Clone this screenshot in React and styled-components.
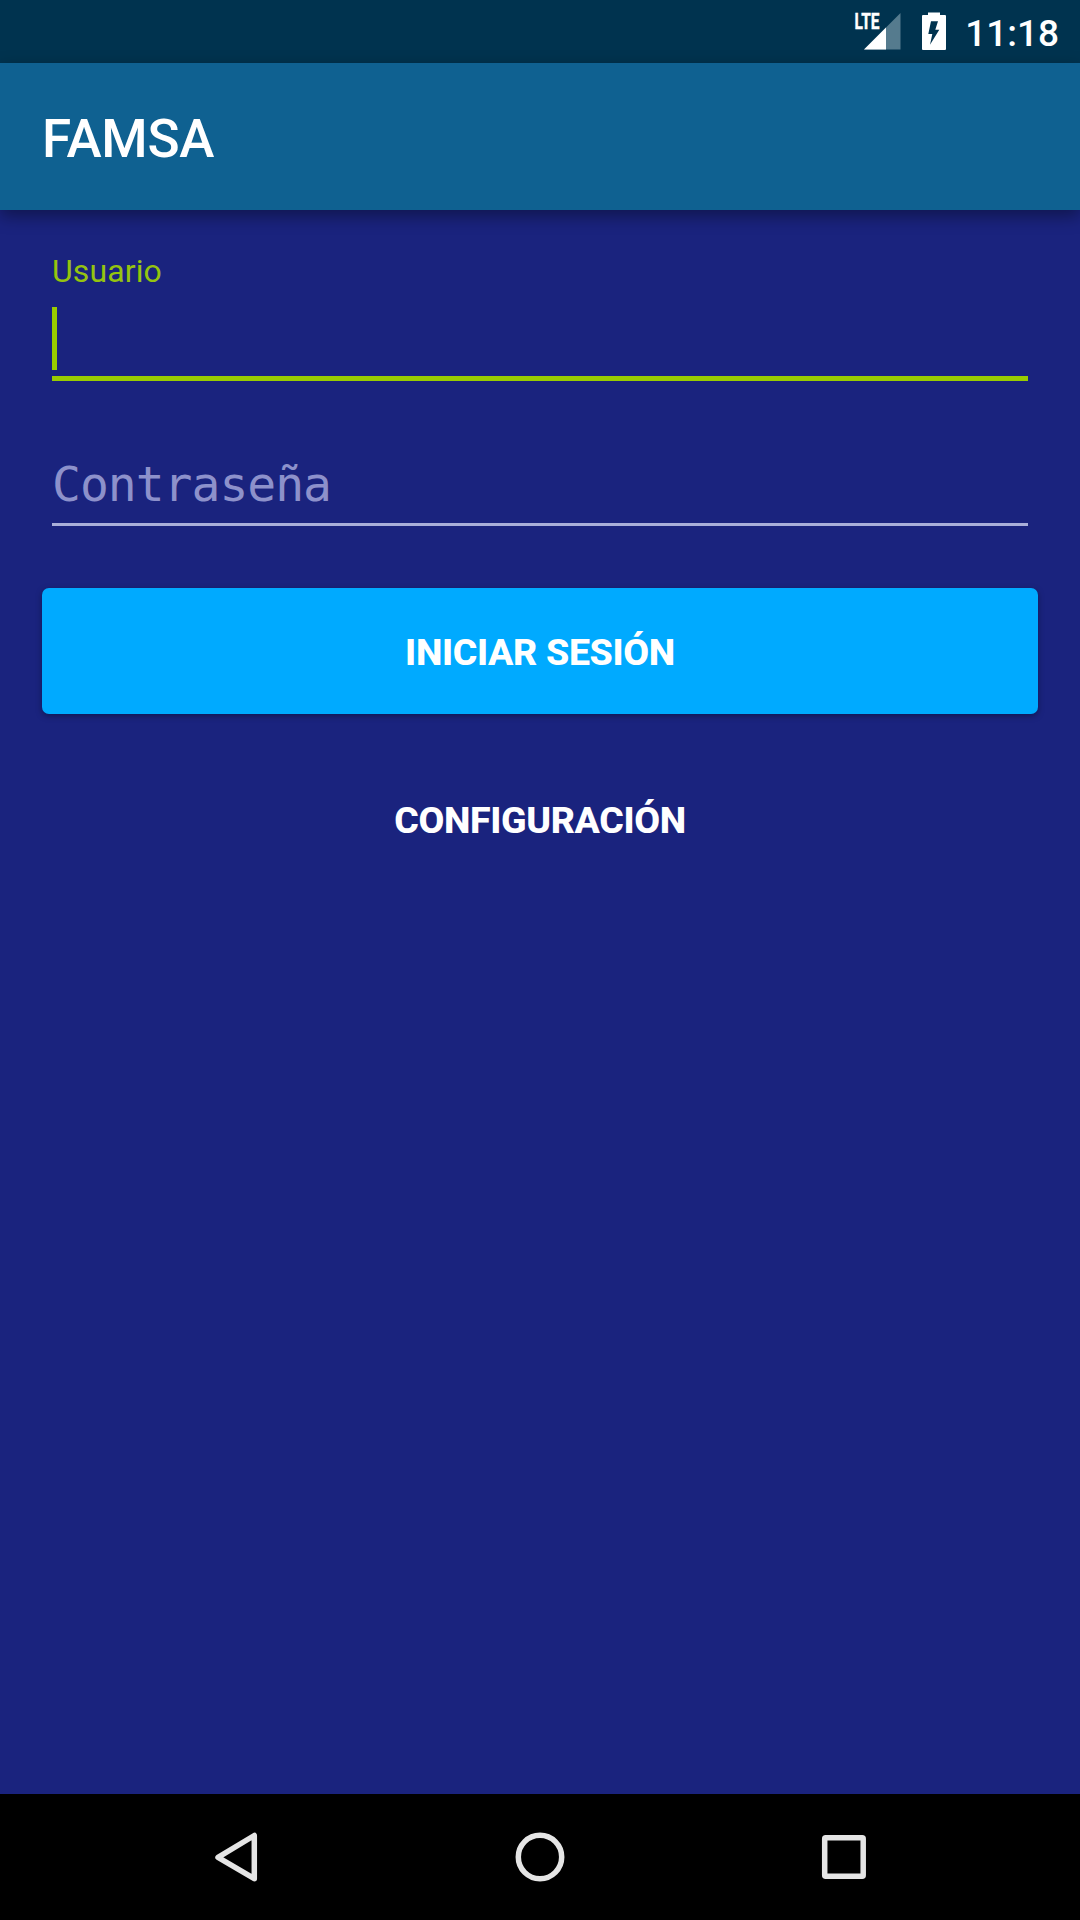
import React from "react";
import styled, { createGlobalStyle } from "styled-components";

const GlobalStyle = createGlobalStyle`
  *, *::before, *::after { box-sizing: border-box; }
  body { margin: 0; background: #1a237e; font-family: Roboto, sans-serif; }
`;

const Screen = styled.div`
  display: flex;
  flex-direction: column;
  width: 1080px;
  height: 1920px;
  overflow: hidden;
  background: #1a237e;
`;

const StatusBar = styled.header`
  display: flex;
  flex: none;
  align-items: flex-start;
  justify-content: flex-end;
  height: 63px;
  padding-right: 21px;
  background: #00334f;
`;

const StatusIcons = styled.svg`
  width: 100px;
  height: 63px;
  margin-right: 15px;
`;

const Clock = styled.time`
  color: #fff;
  font-size: 37px;
  font-weight: 500;
  line-height: 44px;
  padding-top: 12px;
`;

const AppBar = styled.div`
  display: flex;
  flex: none;
  align-items: center;
  height: 147px;
  padding: 5px 42px 0;
  background: #0f6191;
  box-shadow: 0 6px 16px rgba(0, 0, 0, 0.38);
`;

const Title = styled.h1`
  margin: 0;
  color: #fff;
  font-size: 53px;
  font-weight: 500;
  letter-spacing: -0.2px;
  line-height: 64px;
`;

const Form = styled.main`
  display: flex;
  flex: 1;
  flex-direction: column;
  padding: 40px 42px 0;
`;

const Field = styled.div`
  display: flex;
  flex-direction: column;
  justify-content: space-between;
  height: ${(p) => p.$height}px;
  margin: ${(p) => p.$gap || 0}px 10px 0;
  border-bottom: ${(p) => (p.$focused ? "5px solid #99cc00" : "3px solid #a9afda")};
`;

const FloatingLabel = styled.label`
  color: #95c40f;
  font-size: 32px;
  letter-spacing: 0.1px;
  line-height: 42px;
`;

const Caret = styled.span`
  width: 5px;
  height: 63px;
  margin-bottom: 6px;
  background: #99cc00;
`;

const Hint = styled.label`
  color: #8d91cb;
  font-family: "DejaVu Sans Mono", monospace;
  font-size: 48px;
  letter-spacing: -1px;
  line-height: 56px;
`;

const Button = styled.button`
  height: 126px;
  margin-top: ${(p) => p.$gap}px;
  padding: ${(p) => (p.$filled ? "2px" : "0")} 0 0;
  border: 0;
  border-radius: 7px;
  background: ${(p) => (p.$filled ? "#00aaff" : "transparent")};
  box-shadow: ${(p) => (p.$filled ? "0 2px 6px rgba(0, 0, 0, 0.35)" : "none")};
  color: #fff;
  font: 800 37.5px Roboto, sans-serif;
  letter-spacing: -0.35px;
`;

const NavBar = styled.nav`
  display: grid;
  flex: none;
  grid-template-columns: repeat(3, 304px);
  justify-content: center;
  align-items: center;
  justify-items: center;
  height: 126px;
  background: #000;
`;

const NavIcon = styled.svg`
  width: 60px;
  height: 60px;
  fill: none;
  stroke: #e5e5e5;
  stroke-width: 5.5;
  stroke-linejoin: round;
`;

export default function App() {
  return (
    <>
      <GlobalStyle />
      <Screen>
        <StatusBar>
          <StatusIcons viewBox="850 0 100 63">
            <path d="M900.5 13V49.5H864Z" fill="#557b8e" />
            <path d="M886 27.5V49.5H864Z" fill="#fff" />
            <text x="854.5" y="29" fill="#fff" stroke="#fff" strokeWidth="0.4" fontSize="21.5" fontWeight="700" textLength="25" lengthAdjust="spacingAndGlyphs">LTE</text>
            <path fillRule="evenodd" fill="#fff" d="M928 12.5H940V15H945Q946 15 946 16V49Q946 50 945 50H923Q922 50 922 49V16Q922 15 923 15H928ZM931 21.3H938L935.3 29.7H939.3L930 44.7L932.3 34H928.3Z" />
          </StatusIcons>
          <Clock>11:18</Clock>
        </StatusBar>
        <AppBar>
          <Title>FAMSA</Title>
        </AppBar>
        <Form>
          <Field $height={131} $focused>
            <FloatingLabel>Usuario</FloatingLabel>
            <Caret />
          </Field>
          <Field $height={70} $gap={75}>
            <Hint>Contraseña</Hint>
          </Field>
          <Button $gap={62} $filled>INICIAR SESIÓN</Button>
          <Button $gap={43}>CONFIGURACIÓN</Button>
        </Form>
        <NavBar>
          <NavIcon viewBox="0 0 60 60"><path d="M12 30.3L48.3 8.5V51.7Z" /></NavIcon>
          <NavIcon viewBox="0 0 60 60"><circle cx="30" cy="30" r="21.7" /></NavIcon>
          <NavIcon viewBox="0 0 60 60"><rect x="10.7" y="10.7" width="38.5" height="38.5" rx="1" /></NavIcon>
        </NavBar>
      </Screen>
    </>
  );
}
